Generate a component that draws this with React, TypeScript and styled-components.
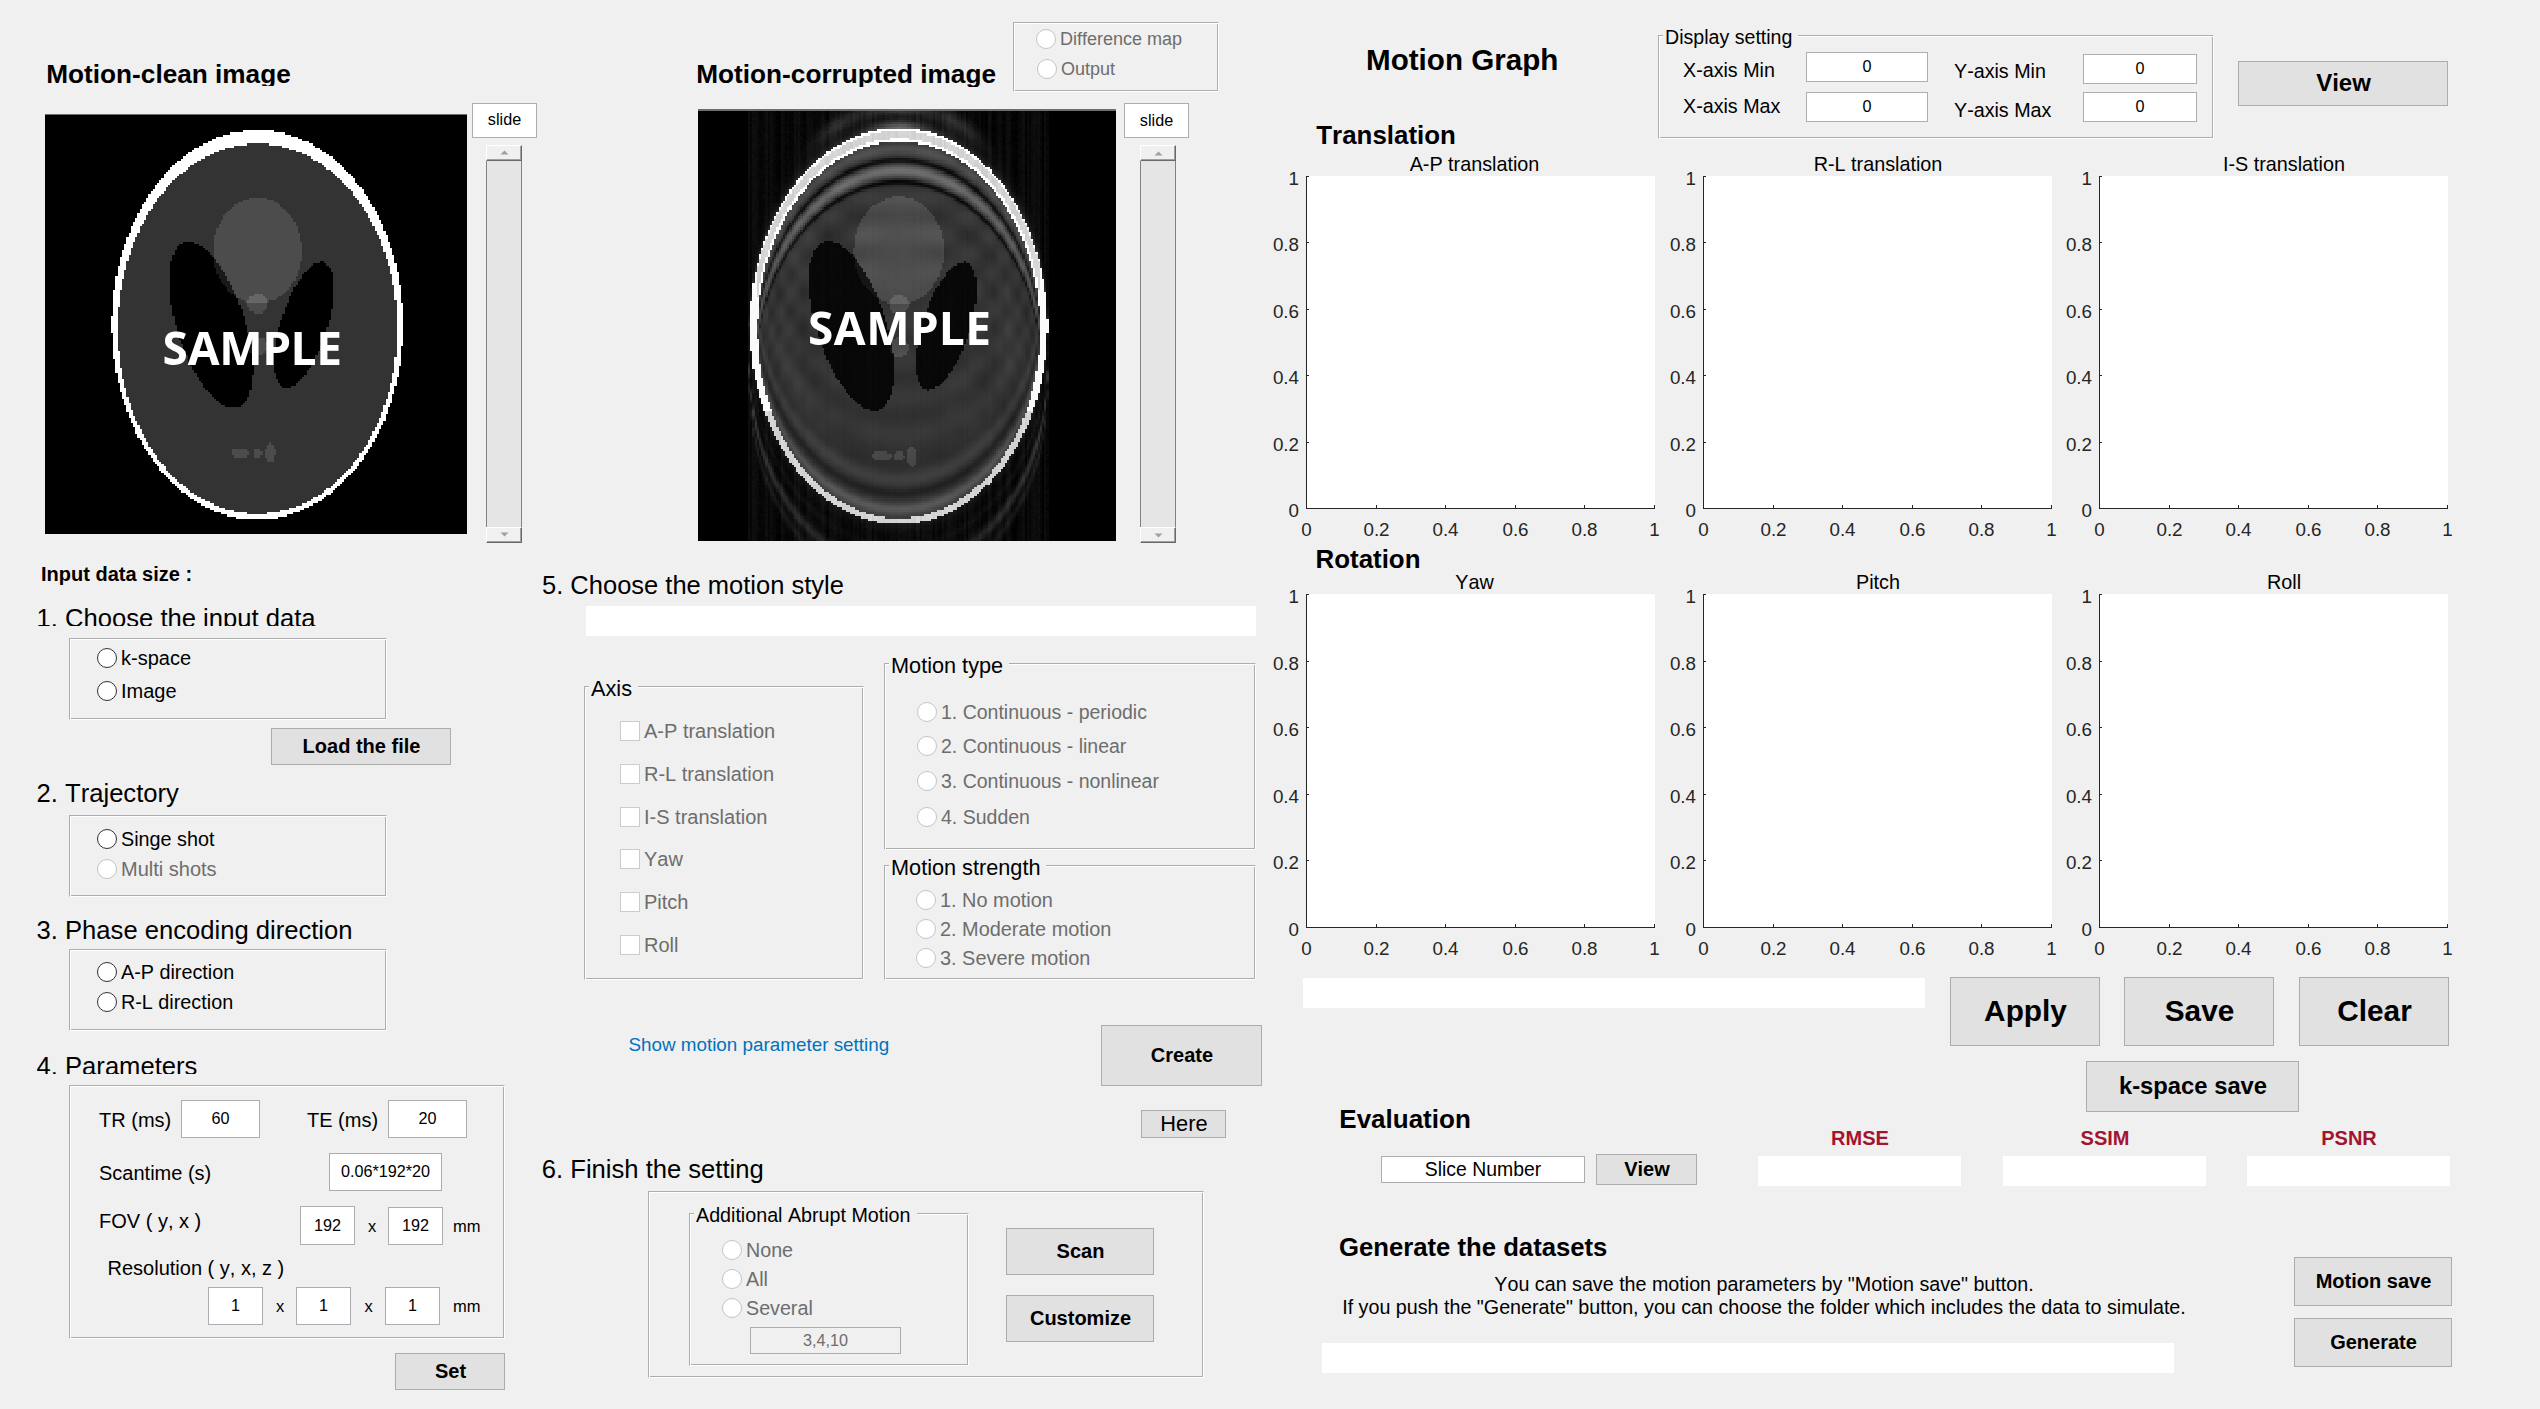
import React, { useLayoutEffect, useRef } from "react";
import styled, { createGlobalStyle, css } from "styled-components";

const GlobalStyle = createGlobalStyle`
  * { box-sizing: border-box; }
  html, body { margin: 0; padding: 0; background: #f0f0f0; }
  body {
    font-family: "Liberation Sans", Arial, sans-serif;
    font-kerning: none;
    color: #000;
    overflow: hidden;
  }
`;

type Space = { $mt?: number; $ml?: number };

const spaced = css<Space>`
  margin-top: ${(p) => p.$mt ?? 0}px;
  margin-left: ${(p) => p.$ml ?? 0}px;
`;

/* ---------- layout ---------- */

const Window = styled.div`
  display: flex;
  width: 2540px;
  height: 1409px;
  background: #f0f0f0;
  overflow: hidden;
`;

const Column = styled.div<Space & { $w?: number }>`
  ${spaced}
  display: flex;
  flex-direction: column;
  align-items: flex-start;
  flex: none;
  ${(p) => p.$w && `width: ${p.$w}px;`}
`;

const Row = styled.div<Space & { $h?: number; $center?: boolean }>`
  ${spaced}
  display: flex;
  flex: none;
  align-items: ${(p) => (p.$center ? "center" : "flex-start")};
  ${(p) => p.$h && `height: ${p.$h}px;`}
`;

const Spread = styled.div<Space & { $gap: number }>`
  ${spaced}
  display: flex;
  flex-direction: column;
  flex: none;
  gap: ${(p) => p.$gap}px;
`;

/* ---------- text ---------- */

const Heading = styled.h2<Space & { $clip?: number; $w?: number; $bold?: boolean; $size?: number }>`
  ${spaced}
  margin-right: 0;
  margin-bottom: 0;
  flex: none;
  font-size: ${(p) => p.$size ?? 25.6}px;
  font-weight: ${(p) => (p.$bold ? 700 : 400)};
  line-height: 30px;
  height: ${(p) => p.$clip ?? 30}px;
  overflow: ${(p) => (p.$clip ? "hidden" : "visible")};
  white-space: nowrap;
  ${(p) => p.$w && `width: ${p.$w}px;`}
`;

const Label = styled.span<Space & { $w?: number; $size?: number; $bold?: boolean }>`
  ${spaced}
  flex: none;
  font-size: ${(p) => p.$size ?? 20}px;
  font-weight: ${(p) => (p.$bold ? 700 : 400)};
  line-height: 24px;
  white-space: nowrap;
  ${(p) => p.$w && `width: ${p.$w}px;`}
`;

const FieldLabel = styled(Label)`
  padding-top: 2px;
`;

const TopLabel = styled(Label)`
  align-self: flex-start;
  line-height: 30px;
`;

const Unit = styled(Label)`
  font-size: 16.5px;
`;

const Times = styled(Unit)`
  padding-left: 1px;
  text-align: center;
`;

const Link = styled.a<Space & { $w: number }>`
  ${spaced}
  flex: none;
  width: ${(p) => p.$w}px;
  font-size: 18.85px;
  line-height: 24px;
  color: #0072bd;
  white-space: nowrap;
`;

const MetricName = styled.span`
  padding-left: 1px;
  font-size: 20px;
  font-weight: 700;
  line-height: 24px;
  color: #a2142f;
  text-align: center;
`;

const Hint = styled.p<Space>`
  ${spaced}
  margin-right: 0;
  margin-bottom: 0;
  width: 884px;
  font-size: 19.72px;
  line-height: 23.3px;
  text-align: center;
  white-space: nowrap;
`;

/* ---------- controls ---------- */

const Panel = styled.section<Space & { $w: number; $h: number }>`
  ${spaced}
  flex: none;
  display: flex;
  flex-direction: column;
  align-items: flex-start;
  width: ${(p) => p.$w}px;
  height: ${(p) => p.$h}px;
  border: 1px solid;
  border-color: #adadad #fff #fff #adadad;
  box-shadow: inset 1px 1px 0 #fff, inset -1px -1px 0 #adadad;
`;

const Legend = styled.h3<{ $mt: number; $size?: number }>`
  flex: none;
  margin: ${(p) => p.$mt}px 0 0 4px;
  padding: 0 6px 0 2px;
  font-size: ${(p) => p.$size ?? 21.7}px;
  font-weight: 400;
  line-height: ${(p) => (p.$size ? 24 : 26)}px;
  background: #f0f0f0;
  white-space: nowrap;
`;

const Button = styled.button<Space & { $w: number; $h: number; $size?: number; $plain?: boolean }>`
  ${spaced}
  flex: none;
  display: flex;
  align-items: center;
  justify-content: center;
  width: ${(p) => p.$w}px;
  height: ${(p) => p.$h}px;
  padding: 0 0 ${(p) => ((p.$size ?? 20) > 23 ? 2 : 0)}px 1px;
  border: 1px solid #adadad;
  border-radius: 0;
  background: #e1e1e1;
  color: #000;
  font-family: inherit;
  font-kerning: none;
  font-size: ${(p) => p.$size ?? 20}px;
  font-weight: ${(p) => (p.$plain ? 400 : 700)};
  white-space: nowrap;
`;

const Edit = styled.div<Space & { $w: number; $h: number; $size?: number; $disabled?: boolean }>`
  ${spaced}
  flex: none;
  display: flex;
  align-items: center;
  justify-content: center;
  width: ${(p) => p.$w}px;
  height: ${(p) => p.$h}px;
  padding-bottom: 1px;
  border: 1px solid #abadb3;
  background: ${(p) => (p.$disabled ? "#f0f0f0" : "#fff")};
  color: ${(p) => (p.$disabled ? "#6d6d6d" : "#000")};
  font-size: ${(p) => p.$size ?? 16.2}px;
  white-space: nowrap;
`;

const Field = styled.div<Space & { $w: number }>`
  ${spaced}
  flex: none;
  width: ${(p) => p.$w}px;
  height: 30px;
  background: #fff;
`;

const OptionLine = styled.label<Space & { $off?: boolean; $size?: number }>`
  ${spaced}
  flex: none;
  display: flex;
  align-items: center;
  gap: 4px;
  height: 20px;
  font-size: ${(p) => p.$size ?? 20}px;
  line-height: 20px;
  color: ${(p) => (p.$off ? "#6d6d6d" : "#000")};
  white-space: nowrap;
`;

const Dot = styled.i<{ $off?: boolean }>`
  width: 20px;
  height: 20px;
  border: 1px solid ${(p) => (p.$off ? "#c4c4c4" : "#333")};
  border-radius: 50%;
  background: #fff;
`;

const Box = styled.i`
  width: 20px;
  height: 20px;
  border: 1px solid #ccc;
  background: #fff;
`;

type OptionProps = { text: string; mt: number; ml: number; off?: boolean; size?: number };

const Radio = ({ text, mt, ml, off, size }: OptionProps) => (
  <OptionLine $mt={mt} $ml={ml} $off={off} $size={size}>
    <Dot $off={off} />
    {text}
  </OptionLine>
);

const Check = ({ text, mt, ml }: OptionProps) => (
  <OptionLine $mt={mt} $ml={ml} $off size={19.8}>
    <Box />
    {text}
  </OptionLine>
);

/* ---------- scroll bar ---------- */

const Track = styled.div<Space>`
  ${spaced}
  flex: none;
  display: flex;
  flex-direction: column;
  justify-content: space-between;
  width: 36px;
  height: 398px;
  background: #e5e5e5;
  border-left: 1px solid #828282;
  border-right: 1px solid #828282;
`;

const Arrow = styled.div`
  display: flex;
  align-items: center;
  justify-content: center;
  height: 16px;
  margin: 0 -1px;
  background: #f0f0f0;
  border: 1px solid;
  border-color: #fff #696969 #696969 #fff;
  box-shadow: inset -1px -1px 0 #a0a0a0;
`;

const ScrollBar = ({ ml }: { ml: number }) => (
  <Track $mt={7} $ml={ml}>
    <Arrow>
      <svg width="9" height="5"><path d="M0.5 4.5 L4.5 0.5 L8.5 4.5 Z" fill="#a0a0a0" /></svg>
    </Arrow>
    <Arrow>
      <svg width="9" height="5"><path d="M0.5 0.5 L4.5 4.5 L8.5 0.5 Z" fill="#a0a0a0" /></svg>
    </Arrow>
  </Track>
);

/* ---------- head phantom ---------- */

const N = 192;

// intensity, half width, half height, centre x, centre y, tilt in degrees
const ELLIPSES = [
  [1, 0.69, 0.92, 0, 0, 0],
  [-0.8, 0.6624, 0.874, 0, -0.0184, 0],
  [-0.2, 0.11, 0.31, 0.22, 0, -18],
  [-0.2, 0.16, 0.41, -0.22, 0, 18],
  [0.1, 0.21, 0.25, 0, 0.35, 0],
  [0.1, 0.046, 0.046, 0, 0.1, 0],
  [0.1, 0.046, 0.046, 0, -0.1, 0],
  [0.1, 0.046, 0.023, -0.08, -0.605, 0],
  [0.1, 0.023, 0.023, 0, -0.606, 0],
  [0.1, 0.023, 0.046, 0.06, -0.605, 0],
];

function phantom(x: number, y: number) {
  let v = 0;
  for (const [a, rx, ry, cx, cy, deg] of ELLIPSES) {
    const t = (deg * Math.PI) / 180;
    const dx = x - cx;
    const dy = y - cy;
    const u = dx * Math.cos(t) + dy * Math.sin(t);
    const w = -dx * Math.sin(t) + dy * Math.cos(t);
    if ((u * u) / (rx * rx) + (w * w) / (ry * ry) <= 1) v += a;
  }
  return v;
}

const bump = (d: number, at: number, width: number) => Math.exp(-(((d - at) / width) ** 2));

function hash(i: number, j: number) {
  const s = Math.sin(i * 127.1 + j * 311.7) * 43758.5453;
  return s - Math.floor(s);
}

// Phantom with the vertical ghosts that head motion leaves behind.
function ghosted(x: number, y: number, i: number, j: number) {
  if (Math.abs(x) > 0.695) return 0;
  const base = phantom(x, y);
  const side = Math.min(1, Math.abs(x) / 0.69);
  const edge = 0.92 * Math.sqrt(Math.max(0, 1 - side * side));
  const inner = 0.874 * Math.sqrt(Math.max(0, 1 - (x / 0.6624) ** 2));
  const fade = Math.sqrt(Math.max(0, 1 - side * side));
  const above = (y - edge) * 96;
  const below = (-y - edge) * 96;
  const grain = (hash(i, 3) - 0.5) * 0.05 + (hash(i, j) - 0.5) * 0.02;
  const skull = base > 0.85 || (base > 0.15 && (x / 0.655) ** 2 + ((y + 0.0184) / 0.874) ** 2 > 1);

  if (skull) {
    const rim = Math.min(-above, (y + 0.0184 - inner) * 96);
    if (y > 0.1 && fade > 0.3) return rim < 1.4 ? 1 : 0.83 + grain;
    return y < -0.4 ? 0.83 + grain : 0.98;
  }
  if (above > 0 || below > 0) {
    const d = Math.max(above, below);
    const near = 0.14 * Math.exp(-d / 3);
    if (above > 0) {
      const cap = 0.24 * bump(x, 0, 0.13) * (0.6 + 0.4 * Math.cos(d * 0.7));
      const arms = 0.14 * bump(d, 9, 4) * bump(Math.abs(x), 0.27, 0.12);
      return Math.abs(near + cap + arms + 0.03 + grain);
    }
    const streaks = 0.2 * bump(d, 20, 3) + 0.1 * bump(d, 28, 2.5) + 0.05 * bump(d, 10, 2);
    return Math.abs(near * 0.5 + streaks * (0.25 + side * 0.6) + 0.03 + grain);
  }
  const top = (inner - 0.0184 - y) * 96;
  const bottom = (y + 0.0184 + inner) * 96;
  const s = fade ** 0.7;
  let v = base < 0.12 ? base * 0.5 + 0.03 : base * 0.97 + 0.01;
  v += s * (0.11 * bump(top, 3, 2.6) - 0.17 * bump(top, 8.2, 1.3) + 0.23 * bump(top, 13, 2.7) - 0.18 * bump(top, 18, 1.2));
  v += s * (0.13 * bump(bottom, 4, 2.6) - 0.06 * bump(bottom, 11, 2.2) + 0.03 * bump(bottom, 17, 2.5) - 0.03 * bump(bottom, 23, 3));
  if (base >= 0.15) {
    const inside = Math.max(0, top - 20);
    v += 0.016 * Math.sin(inside * 0.42) * Math.exp(-inside / 60);
    v += 0.014 * Math.sin(bottom * 0.36 + 1) + 0.012 * Math.sin(x * 17 + y * 9) * side;
    v += 0.014 * Math.sin(Math.hypot(x * 1.3, y) * 30) * side;
  }
  return v + grain * 0.2;
}

const Frame = styled.div<Space & { $w: number; $h: number; $rim: number }>`
  ${spaced}
  position: relative;
  flex: none;
  width: ${(p) => p.$w}px;
  height: ${(p) => p.$h}px;
  background: #000;
  border-top: ${(p) => p.$rim}px solid #6e6e6e;
`;

const Raster = styled.canvas`
  display: block;
  width: 100%;
  height: 100%;
  image-rendering: pixelated;
`;

const Stamp = styled.span<{ $x: number; $y: number; $track: number }>`
  position: absolute;
  left: ${(p) => p.$x}px;
  top: ${(p) => p.$y}px;
  font-family: "Noto Sans", sans-serif;
  font-size: 46px;
  font-weight: 700;
  line-height: 60px;
  letter-spacing: ${(p) => p.$track}px;
  color: #fff;
`;

type SliceProps = {
  w: number;
  h: number;
  ml: number;
  mt: number;
  rim: number;
  corrupted?: boolean;
  sx: number;
  sy: number;
  track: number;
};

function Slice({ w, h, ml, mt, rim, corrupted, sx, sy, track }: SliceProps) {
  const ref = useRef<HTMLCanvasElement>(null);
  useLayoutEffect(() => {
    const ctx = ref.current?.getContext("2d");
    if (!ctx) return;
    const img = ctx.createImageData(N, N);
    for (let j = 0; j < N; j++) {
      for (let i = 0; i < N; i++) {
        const px = (i + 0.5) / (N / 2) - 1;
        const py = 1 - (j + 0.5) / (N / 2);
        const v = corrupted
          ? ghosted(px * 0.97 + 0.038, py * 0.998, i, j)
          : phantom(px - 0.007, (py + 0.002) * 0.99);
        const g = Math.round(255 * Math.max(0, Math.min(1, v)));
        const o = (j * N + i) * 4;
        img.data[o] = img.data[o + 1] = img.data[o + 2] = g;
        img.data[o + 3] = 255;
      }
    }
    ctx.putImageData(img, 0, 0);
  }, [corrupted]);
  return (
    <Frame $w={w} $h={h} $ml={ml} $mt={mt} $rim={rim}>
      <Raster ref={ref} width={N} height={N} />
      <Stamp $x={sx} $y={sy} $track={track}>SAMPLE</Stamp>
    </Frame>
  );
}

/* ---------- axes ---------- */

const Chart = styled.svg`
  display: block;
  flex: none;
  overflow: visible;
  font-family: "Liberation Sans", Arial, sans-serif;
`;

const TICKS = [0, 0.2, 0.4, 0.6, 0.8, 1];
const PLOT_W = 348;

type AxesProps = { title: string; titleX: number; titleY: number; x0: number; top: number; plotH: number; width: number; height: number };

const Axes = ({ title, titleX, titleY, x0, top, plotH, width, height }: AxesProps) => (
  <Chart width={width} height={height}>
    <rect x={x0} y={top} width={PLOT_W + 1} height={plotH + 1} fill="#fff" />
    <text x={x0 + titleX} y={titleY} fontSize="19.8" textAnchor="middle" fill="#000">{title}</text>
    <path
      d={`M${x0 + 0.5} ${top} V${top + plotH + 0.5} H${x0 + PLOT_W + 1}`}
      stroke="#262626"
      fill="none"
    />
    {TICKS.map((t) => {
      const x = x0 + Math.round(t * PLOT_W) + 0.5;
      const y = top + plotH - Math.round(t * plotH) + 0.5;
      return (
        <g key={t} fontSize="18.8" fill="#262626">
          <path d={`M${x} ${top + plotH} v-3 M${x0} ${y} h3`} stroke="#262626" />
          <text x={x} y={top + plotH + 28} textAnchor="middle">{t}</text>
          <text x={x0 - 7} y={y + 8.2} textAnchor="end">{t}</text>
        </g>
      );
    })}
  </Chart>
);

/* ---------- sections ---------- */

const Viewers = () => (
  <Row $h={550}>
    <Column $w={640}>
      <Heading $bold $size={26.2} $mt={58.6} $ml={46.3} $clip={27.4}>Motion-clean image</Heading>
      <Row>
        <Slice w={422} h={420} mt={28} ml={45} rim={1} sx={117.5} sy={202.5} track={-0.2} />
        <Column $ml={5} $mt={17}>
          <Edit $w={65} $h={35}>slide</Edit>
          <ScrollBar ml={14} />
        </Column>
      </Row>
    </Column>
    <Column $w={640}>
      <Row $h={92}>
        <Heading $bold $size={26.2} $mt={58.6} $ml={56.3} $w={316.7} $clip={28.4}>Motion-corrupted image</Heading>
        <Panel $w={206} $h={70} $mt={22}>
          <Radio text="Difference map" mt={6} ml={22} off size={18} />
          <Radio text="Output" mt={10} ml={23} off size={18} />
        </Panel>
      </Row>
      <Row>
        <Slice w={418} h={432} mt={17} ml={58} rim={2} sx={110} sy={186.1} track={0.5} corrupted />
        <Column $ml={8} $mt={11}>
          <Edit $w={65} $h={35}>slide</Edit>
          <ScrollBar ml={16} />
        </Column>
      </Row>
    </Column>
  </Row>
);

const Setup = () => (
  <Column $w={520}>
    <Label $bold $mt={12} $ml={41}>Input data size :</Label>
    <Heading $mt={17} $ml={36.6} $clip={23}>1. Choose the input data</Heading>
    <Panel $w={318} $h={82} $mt={12} $ml={69}>
      <Radio text="k-space" mt={9} ml={27} />
      <Radio text="Image" mt={13} ml={27} />
    </Panel>
    <Button $w={180} $h={37} $mt={8} $ml={271}>Load the file</Button>
    <Heading $mt={13} $ml={36.6}>2. Trajectory</Heading>
    <Panel $w={318} $h={82} $mt={7} $ml={69}>
      <Radio text="Singe shot" mt={13} ml={27} size={19.8} />
      <Radio text="Multi shots" mt={10} ml={27} off />
    </Panel>
    <Heading $mt={17.5} $ml={36.6}>3. Phase encoding direction</Heading>
    <Panel $w={318} $h={82} $mt={4.5} $ml={69}>
      <Radio text="A-P direction" mt={12} ml={27} size={19.8} />
      <Radio text="R-L direction" mt={10} ml={27} size={19.8} />
    </Panel>
    <Heading $mt={20} $ml={36.6} $clip={23}>4. Parameters</Heading>
    <Panel $w={436} $h={254} $mt={11} $ml={69}>
      <Row $center $h={38} $mt={14} $ml={29}>
        <FieldLabel $w={82}>TR (ms)</FieldLabel>
        <Edit $w={79} $h={38}>60</Edit>
        <FieldLabel $ml={47} $w={81}>TE (ms)</FieldLabel>
        <Edit $w={79} $h={38}>20</Edit>
      </Row>
      <Row $center $h={38} $mt={15} $ml={29}>
        <FieldLabel $w={230}>Scantime (s)</FieldLabel>
        <Edit $w={113} $h={38}>0.06*192*20</Edit>
      </Row>
      <Row $center $h={39} $mt={15} $ml={29}>
        <TopLabel $w={201}>FOV ( y, x )</TopLabel>
        <Edit $w={55} $h={39}>192</Edit>
        <Times $w={33}>x</Times>
        <Edit $w={55} $h={38} $mt={1}>192</Edit>
        <Unit $ml={10}>mm</Unit>
      </Row>
      <Label $mt={11} $ml={37.5}>Resolution ( y, x, z )</Label>
      <Row $center $h={38} $mt={7} $ml={138}>
        <Edit $w={55} $h={38}>1</Edit>
        <Times $w={33}>x</Times>
        <Edit $w={55} $h={38}>1</Edit>
        <Times $w={34}>x</Times>
        <Edit $w={55} $h={38}>1</Edit>
        <Unit $ml={13}>mm</Unit>
      </Row>
    </Panel>
    <Button $w={110} $h={37} $mt={14} $ml={395}>Set</Button>
  </Column>
);

const MotionSetup = () => (
  <Column $w={760}>
    <Heading $mt={20} $ml={22} $size={25.5}>5. Choose the motion style</Heading>
    <Field $w={670} $mt={6} $ml={66} />
    <Row>
      <Panel $w={280} $h={294} $mt={50} $ml={64}>
        <Legend $mt={-11.3}>Axis</Legend>
        <Check text="A-P translation" mt={19.3} ml={35} />
        <Check text="R-L translation" mt={23} ml={35} />
        <Check text="I-S translation" mt={23} ml={35} />
        <Check text="Yaw" mt={22} ml={35} />
        <Check text="Pitch" mt={23} ml={35} />
        <Check text="Roll" mt={23} ml={35} />
      </Panel>
      <Column $ml={20} $mt={27}>
        <Panel $w={372} $h={187}>
          <Legend $mt={-11}>Motion type</Legend>
          <Radio text="1. Continuous - periodic" mt={23} ml={32} off size={19.5} />
          <Radio text="2. Continuous - linear" mt={14} ml={32} off size={19.5} />
          <Radio text="3. Continuous - nonlinear" mt={15} ml={32} off size={19.5} />
          <Radio text="4. Sudden" mt={16} ml={32} off size={19.5} />
        </Panel>
        <Panel $w={372} $h={115} $mt={15}>
          <Legend $mt={-11}>Motion strength</Legend>
          <Radio text="1. No motion" mt={9} ml={31} off size={19.9} />
          <Radio text="2. Moderate motion" mt={9} ml={31} off size={19.9} />
          <Radio text="3. Severe motion" mt={9} ml={31} off size={19.9} />
        </Panel>
      </Column>
    </Row>
    <Row>
      <Link $mt={52.5} $ml={108.4} $w={472.6}>Show motion parameter setting</Link>
      <Column $mt={45}>
        <Button $w={161} $h={61}>Create</Button>
        <Button $plain $size={21.8} $w={85} $h={28} $mt={24} $ml={40}>Here</Button>
      </Column>
    </Row>
    <Heading $mt={16} $ml={21.8}>6. Finish the setting</Heading>
    <Panel $w={556} $h={187} $mt={7} $ml={128}>
      <Row>
        <Panel $w={280} $h={153} $mt={21} $ml={40}>
          <Legend $mt={-11} $size={19.7}>Additional Abrupt Motion</Legend>
          <Radio text="None" mt={13} ml={32} off size={19.7} />
          <Radio text="All" mt={9} ml={32} off size={19.7} />
          <Radio text="Several" mt={9} ml={32} off size={19.7} />
          <Edit $disabled $w={151} $h={27} $mt={9} $ml={60}>3,4,10</Edit>
        </Panel>
        <Spread $gap={20} $mt={36} $ml={37}>
          <Button $w={148} $h={47}>Scan</Button>
          <Button $w={148} $h={47}>Customize</Button>
        </Spread>
      </Row>
    </Panel>
  </Column>
);

const GraphHeader = () => (
  <Row $h={150}>
    <Column $w={378}>
      <Heading $bold $size={29.6} $mt={44.5} $ml={86}>Motion Graph</Heading>
      <Heading $bold $size={25.9} $mt={45.5} $ml={36.3}>Translation</Heading>
    </Column>
    <Panel $w={556} $h={104} $mt={35}>
      <Legend $mt={-11} $size={19.6}>Display setting</Legend>
      <Row>
        <Spread $gap={12.5} $mt={8.5} $ml={24}>
          <Label $w={123} $size={19.7}>X-axis Min</Label>
          <Label $w={123} $size={19.7}>X-axis Max</Label>
        </Spread>
        <Spread $gap={10} $mt={3}>
          <Edit $w={122} $h={30}>0</Edit>
          <Edit $w={122} $h={30}>0</Edit>
        </Spread>
        <Spread $gap={14.6} $mt={10} $ml={26}>
          <Label $w={129} $size={19.7}>Y-axis Min</Label>
          <Label $w={129} $size={19.7}>Y-axis Max</Label>
        </Spread>
        <Spread $gap={8} $mt={5}>
          <Edit $w={114} $h={30}>0</Edit>
          <Edit $w={114} $h={30}>0</Edit>
        </Spread>
      </Row>
    </Panel>
    <Button $size={24} $w={210} $h={45} $mt={61} $ml={24}>View</Button>
  </Row>
);

const PlotRow = ({ titles, titleY, top, plotH, height }: { titles: string[]; titleY: number; top: number; plotH: number; height: number }) => (
  <Row>
    <Axes title={titles[0]} titleX={168.5} titleY={titleY} x0={26} top={top} plotH={plotH} width={397} height={height} />
    <Axes title={titles[1]} titleX={175} titleY={titleY} x0={26} top={top} plotH={plotH} width={396} height={height} />
    <Axes title={titles[2]} titleX={185} titleY={titleY} x0={26} top={top} plotH={plotH} width={397} height={height} />
  </Row>
);

const Metric = ({ name, ml }: { name: string; ml: number }) => (
  <Spread $gap={6} $ml={ml}>
    <MetricName>{name}</MetricName>
    <Field $w={203} />
  </Spread>
);

const Results = () => (
  <>
    <Row>
      <Field $w={622} $mt={15} $ml={23} />
      <Button $size={29.8} $w={150} $h={69} $mt={14} $ml={25}>Apply</Button>
      <Button $size={29.8} $w={150} $h={69} $mt={14} $ml={24}>Save</Button>
      <Button $size={29.8} $w={150} $h={69} $mt={14} $ml={25}>Clear</Button>
    </Row>
    <Row>
      <Column $w={478}>
        <Heading $bold $size={26} $mt={57.5} $ml={59.3}>Evaluation</Heading>
        <Row $mt={20.5} $ml={101}>
          <Edit $size={19.4} $w={204} $h={27} $mt={2}>Slice Number</Edit>
          <Button $w={101} $h={31} $ml={11}>View</Button>
        </Row>
      </Column>
      <Column>
        <Button $size={23.8} $w={213} $h={51} $mt={15} $ml={328}>k-space save</Button>
        <Row $mt={14}>
          <Metric name="RMSE" ml={0} />
          <Metric name="SSIM" ml={42} />
          <Metric name="PSNR" ml={41} />
        </Row>
      </Column>
    </Row>
    <Row>
      <Column $w={1014}>
        <Heading $bold $size={25.7} $mt={45.5} $ml={59}>Generate the datasets</Heading>
        <Hint $mt={11.5} $ml={42}>
          You can save the motion parameters by "Motion save" button.
          <br />
          If you push the "Generate" button, you can choose the folder which includes the data to simulate.
        </Hint>
        <Field $w={852} $mt={23.4} $ml={42} />
      </Column>
      <Spread $gap={12} $mt={71}>
        <Button $w={158} $h={49}>Motion save</Button>
        <Button $w={158} $h={49}>Generate</Button>
      </Spread>
    </Row>
  </>
);

export default function App() {
  return (
    <>
      <GlobalStyle />
      <Window>
        <Column $w={1280}>
          <Viewers />
          <Row>
            <Setup />
            <MotionSetup />
          </Row>
        </Column>
        <Column $w={1260}>
          <GraphHeader />
          <PlotRow titles={["A-P translation", "R-L translation", "I-S translation"]} titleY={21.3} top={26} plotH={332} height={390} />
          <Heading $bold $size={25.9} $mt={3.5} $ml={35.5} $clip={24.5}>Rotation</Heading>
          <PlotRow titles={["Yaw", "Pitch", "Roll"]} titleY={20.8} top={26} plotH={333} height={395} />
          <Results />
        </Column>
      </Window>
    </>
  );
}
